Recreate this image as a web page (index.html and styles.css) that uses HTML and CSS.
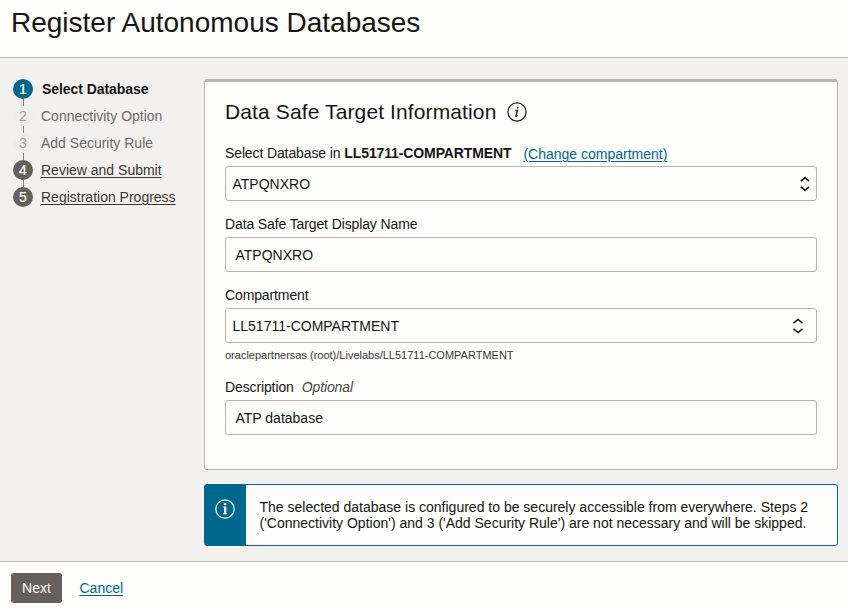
FILE: index.html
```html
<!DOCTYPE html>
<html lang="en">
<head>
<meta charset="utf-8">
<title>Register Autonomous Databases</title>
<link rel="stylesheet" href="styles.css">
</head>
<body>
<header class="header"><h1><span>Register Autonomous Databases</span></h1></header>
<main class="main">
  <nav>
    <ol class="steps">
      <li class="step current"><span class="num">1</span><span class="name">Select Database</span></li>
      <li class="step skipped"><span class="num">2</span><span class="name">Connectivity Option</span></li>
      <li class="step skipped"><span class="num">3</span><span class="name">Add Security Rule</span></li>
      <li class="step"><span class="num">4</span><a class="name">Review and Submit</a></li>
      <li class="step"><span class="num">5</span><a class="name">Registration Progress</a></li>
    </ol>
  </nav>
  <div class="content">
    <section class="panel">
      <h2><span class="title">Data Safe Target Information</span>
        <svg class="info" width="20" height="20" viewBox="0 0 20 20" fill="none" stroke="#292725"><circle cx="10" cy="10" r="9.1" stroke-width="1.3"/><path d="M8.3 8.4h2.2L9 13.6q-.2.9.6.5l1-.7" stroke-width="1.5"/><circle cx="10.8" cy="5.8" r=".9" fill="#292725" stroke="none"/></svg>
      </h2>
      <div class="label"><span>Select Database in</span><b>LL51711-COMPARTMENT</b><a class="change">(Change compartment)</a></div>
      <div class="field select"><span>ATPQNXRO</span>
        <svg class="arrows" width="10" height="16" viewBox="0 0 10 16" fill="none" stroke="#161513" stroke-width="1.7"><path d="M1 5.2l4-3.5 4 3.500M1 10.800l4 3.500 4-3.500"/></svg>
      </div>
      <div class="label"><span>Data Safe Target Display Name</span></div>
      <div class="field input"><span>ATPQNXRO</span></div>
      <div class="label"><span>Compartment</span></div>
      <div class="field select wide"><span>LL51711-COMPARTMENT</span>
        <svg class="arrows" width="12" height="16" viewBox="0 0 12 16" fill="none" stroke="#161513" stroke-width="1.5"><path d="M1.5 5.2L6 1.5l4.500 3.700M1.500 10.800L6 14.500l4.500-3.700"/></svg>
      </div>
      <p class="hint"><span>oraclepartnersas (root)/Livelabs/LL51711-COMPARTMENT</span></p>
      <div class="label"><span>Description</span><i>Optional</i></div>
      <div class="field input"><span>ATP database</span></div>
    </section>
    <section class="notice">
      <div class="notice-icon"><svg width="20" height="20" viewBox="0 0 20 20"><circle cx="10" cy="10" r="9.200" fill="none" stroke="#e8f2f5" stroke-width="1.300"/><path d="M8.900 4h2.400v2H8.900zM8.300 7.600h3v6.600h.8v1H8v-1h1V8.600h-.7z" fill="#fff"/></svg></div>
      <p>The selected database is configured to be securely accessible from everywhere. Steps 2<br>('Connectivity Option') and 3 ('Add Security Rule') are not necessary and will be skipped.</p>
    </section>
  </div>
</main>
<footer class="footer"><button>Next</button><a class="cancel">Cancel</a></footer>
</body>
</html>
```
FILE: styles.css
```css
* { box-sizing: border-box; }
body {
  margin: 0;
  width: 848px;
  height: 608px;
  overflow: hidden;
  display: flex;
  flex-direction: column;
  background: #fdfdfc;
  color: #161513;
  font: 14px/16px "Liberation Sans", Arial, sans-serif;
}
h1, h2, p, ol { margin: 0; padding: 0; font-weight: normal; }
.header { height: 58px; padding: 6px 11px; border-bottom: 1px solid #bbb7b3; }
h1 { font-size: 28px; line-height: 34px; white-space: nowrap; }
.main {
  height: 503px;
  display: grid;
  grid-template-columns: 192px 634px;
  padding: 21px 10px 0 12px;
  background: #f3f1f0;
}
.steps { list-style: none; }
.step { position: relative; display: flex; align-items: center; height: 20px; margin-bottom: 7px; gap: 8px; color: #3a3632; white-space: nowrap; }
.step:not(:last-child)::after { content: ""; position: absolute; left: 11px; top: 20px; width: 1px; height: 7px; background: #8b8580; }
.num { width: 20px; height: 20px; margin-left: 1px; border-radius: 50%; background: #665f5b; color: #fff; line-height: 20px; text-align: center; -webkit-text-stroke: .2px; }
.current { color: #161513; font-weight: bold; }
.current .name { margin-left: 1px; letter-spacing: -.07px; }
.current .num { background: #00688c; font-weight: normal; }
.skipped { color: #6f6964; }
.skipped .num { background: #f0eeed; color: #a29d99; -webkit-text-stroke: 0; }
a { text-decoration: underline; text-underline-offset: 2px; text-decoration-thickness: 1px; }
.panel { height: 391px; padding: 18px 20px 0; border: 1px solid #bbb5af; border-top-width: 3px; border-radius: 3px; background: #fdfdfc; }
h2 { display: flex; align-items: center; height: 24px; gap: 11px; font-size: 21px; letter-spacing: .12px; white-space: nowrap; }
.info { flex: none; }
.label { display: flex; align-items: center; height: 16px; margin: 14px 0 6px; letter-spacing: -.12px; white-space: nowrap; }
h2 + .label { margin: 21px 0 5px; }
.label b { margin-left: 4px; }
.change { margin: 2px 0 0 12px; color: #00688c; letter-spacing: 0; }
.field { display: flex; align-items: center; justify-content: space-between; height: 35px; width: 592px; padding: 0 7px; border: 1px solid #bbb5af; border-radius: 3px; background: #fdfdfc; }
.field span { margin-left: -.5px; }
.field + .label { margin: 15px 0 5px; }
.input { padding-left: 10px; }
.arrows { margin-top: 1px; }
.select .arrows { margin-right: -1px; }
.wide .arrows { margin: 0 5px 0 0; }
.hint { height: 14px; margin-top: 5px; font-size: 11px; line-height: 14px; color: #3a3632; }
.hint + .label { margin: 17px 0 5px; }
.label i { margin-left: 8px; color: #4d4743; }
.notice { display: flex; height: 62px; margin-top: 14px; border: 1px solid #00688c; border-radius: 3px; background: #fdfdfc; }
.notice-icon { width: 41px; background: #00688c; padding: 14px 0 0 10px; }
.notice p { padding: 14px 0 0 13.5px; white-space: nowrap; }
.footer { height: 47px; padding: 11px; border-top: 1px solid #bbb7b3; display: flex; align-items: flex-start; }
button { width: 51px; height: 30px; padding: 0; border: 0; border-radius: 3px; background: #665f5b; color: #fff; font: inherit; }
.cancel { margin: 7px 0 0 17.5px; color: #00688c; }
```
